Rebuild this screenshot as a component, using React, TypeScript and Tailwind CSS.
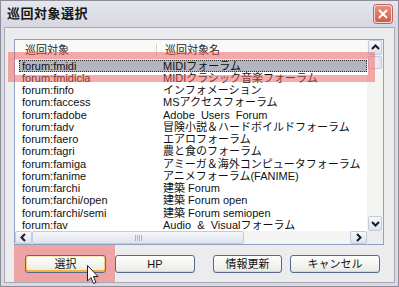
import React from 'react';

const rows: [string, string][] = [
  ['forum:fmidi', 'MIDIフォーラム'],
  ['forum:fmidicla', 'MIDIクラシック音楽フォーラム'],
  ['forum:finfo', 'インフォメーション'],
  ['forum:faccess', 'MSアクセスフォーラム'],
  ['forum:fadobe', 'Adobe  Users  Forum'],
  ['forum:fadv', '冒険小説＆ハードボイルドフォーラム'],
  ['forum:faero', 'エアロフォーラム'],
  ['forum:fagri', '農と食のフォーラム'],
  ['forum:famiga', 'アミーガ＆海外コンピュータフォーラム'],
  ['forum:fanime', 'アニメフォーラム(FANIME)'],
  ['forum:farchi', '建築 Forum'],
  ['forum:farchi/open', '建築 Forum open'],
  ['forum:farchi/semi', '建築 Forum semiopen'],
  ['forum:fav', 'Audio  &  Visualフォーラム'],
];

const Chevron = ({ dir }: { dir: 'up' | 'down' | 'left' | 'right' }) => {
  const pts = {
    up: '1,6 4.5,2.5 8,6',
    down: '1,3 4.5,6.5 8,3',
    left: '6,1 2.5,4.5 6,8',
    right: '3,1 6.5,4.5 3,8',
  }[dir];
  return (
    <svg width="9" height="9" viewBox="0 0 9 9">
      <polyline points={pts} fill="none" stroke="#1b1b1b" strokeWidth="2" />
    </svg>
  );
};

const ScrollBtn = ({ dir, className }: { dir: 'up' | 'down' | 'left' | 'right'; className: string }) => (
  <div
    className={`flex items-center justify-center rounded-[2px] border border-[#c3cbe0] bg-gradient-to-b from-[#f7f8fc] to-[#dde2ee] ${className}`}
  >
    <Chevron dir={dir} />
  </div>
);

const Button = ({ label, hot, className }: { label: string; hot?: boolean; className: string }) => (
  <div
    className={`flex h-[18px] items-center justify-center rounded-[3px] border border-[#55688e] bg-gradient-to-b from-[#ffffff] to-[#e9e9e4] text-[11px] text-[#111] ${
      hot ? 'shadow-[inset_0_-2px_0_#f3b13f,inset_1px_0_0_#f9cf7c,inset_-1px_0_0_#f9cf7c,inset_0_1px_0_#fde6b8]' : 'shadow-[inset_0_-1px_0_#d8d8d0]'
    } ${className}`}
  >
    {label}
  </div>
);

export default function App() {
  return (
    <div className="relative h-[287px] w-[399px] overflow-hidden font-['Liberation_Sans','Noto_Sans_CJK_JP',sans-serif]">
      <div className="flex h-full flex-col border border-[#8c8d99] bg-[#d9dae2]">
        {/* title bar */}
        <div className="flex h-[26px] shrink-0 items-center justify-between bg-gradient-to-b from-[#e6e7ed] to-[#d6d7e0] pl-[6px] pr-[6px]">
          <span className="text-[13px] font-bold tracking-[0.5px] text-[#161616]">巡回対象選択</span>
          <div className="flex h-[18px] w-[18px] items-center justify-center rounded-[3px] border border-[#f6d9d4] bg-gradient-to-b from-[#eb8e80] to-[#cf5c4b] shadow-[0_0_0_1px_#b9675d]">
            <svg width="10" height="10" viewBox="0 0 10 10">
              <path d="M1 1 L9 9 M9 1 L1 9" stroke="#fff" strokeWidth="2" />
            </svg>
          </div>
        </div>

        {/* client */}
        <div className="mx-[3px] mb-[3px] flex flex-1 flex-col border border-[#a8a9b4] bg-[#ececef] pl-[9px] pt-[11px]">
          {/* list view */}
          <div className="flex h-[206px] w-[370px] border border-[#8fa2bf] bg-white">
            <div className="flex w-[352px] flex-col">
              <div className="flex h-[20px] shrink-0 items-center border-b border-[#e4e4dc] bg-[#f9f9f7] text-[11px] text-[#222]">
                <div className="w-[141px] pl-[10px] pt-[2px]">巡回対象</div>
                <div className="h-[12px] w-[2px] border-l border-r border-l-[#d4d4cc] border-r-white" />
                <div className="pl-[7px] pt-[2px]">巡回対象名</div>
              </div>
              <div className="h-[171px] overflow-hidden">
                {rows.map(([id, name], i) => (
                  <div
                    key={id}
                    className={`ml-[4px] flex h-[12.25px] items-center text-[11px] leading-none text-[#111] ${
                      i === 0 ? 'bg-[#b3b5c0] outline-1 -outline-offset-1 outline-dotted outline-[#333]' : ''
                    }`}
                  >
                    <div className="w-[144px] whitespace-pre pl-[3px]">{id}</div>
                    <div className="whitespace-pre">{name}</div>
                  </div>
                ))}
              </div>
              {/* horizontal scrollbar */}
              <div className="flex h-[13px] shrink-0 items-stretch bg-[#f4f4f2]">
                <ScrollBtn dir="left" className="w-[17px]" />
                <div className="flex w-[212px] items-center justify-center rounded-[2px] border border-[#c3cbe0] bg-gradient-to-b from-[#f5f6fb] to-[#dfe3ee]">
                  <div className="flex gap-[1px]">
                    <div className="h-[6px] w-[1px] bg-[#a9b3c9]" />
                    <div className="h-[6px] w-[1px] bg-[#a9b3c9]" />
                    <div className="h-[6px] w-[1px] bg-[#a9b3c9]" />
                    <div className="h-[6px] w-[1px] bg-[#a9b3c9]" />
                  </div>
                </div>
                <div className="flex-1" />
                <ScrollBtn dir="right" className="w-[17px]" />
              </div>
            </div>
            {/* vertical scrollbar */}
            <div className="flex w-[16px] flex-col">
              <div className="flex h-[191px] flex-col bg-[#f4f4f2] px-[1px]">
                <ScrollBtn dir="up" className="h-[15px]" />
                <div className="mt-[1px] h-[13px] rounded-[2px] border border-[#c3cbe0] bg-gradient-to-r from-[#f5f6fb] to-[#dfe3ee]" />
                <div className="flex-1" />
                <ScrollBtn dir="down" className="h-[15px]" />
              </div>
              <div className="flex-1 bg-[#ececef]" />
            </div>
          </div>

          {/* buttons */}
          <div className="flex items-start">
            <div className="h-[37px] w-[101px] bg-[rgba(240,90,90,0.5)] pl-[11px] pt-[10px]">
              <Button label="選択" hot className="w-[81px]" />
            </div>
            <Button label="HP" className="mt-[10px] w-[80px]" />
            <Button label="情報更新" className="ml-[18px] mt-[10px] w-[69px]" />
            <Button label="キャンセル" className="ml-[8px] mt-[10px] w-[90px]" />
          </div>
        </div>
      </div>

      {/* annotation around the selected row */}
      <div className="pointer-events-none absolute left-[8px] top-[52px] h-[30px] w-[367px] border-[7px] border-[rgba(240,90,90,0.5)]" />

      {/* mouse pointer */}
      <svg className="pointer-events-none absolute left-[87px] top-[265px]" width="12" height="20" viewBox="0 0 12 20">
        <path d="M0.5 0.5 L0.5 16 L4 12.5 L6.5 18.5 L9 17.5 L6.5 11.5 L11 11.5 Z" fill="#fff" stroke="#222" strokeWidth="1" />
      </svg>
    </div>
  );
}
